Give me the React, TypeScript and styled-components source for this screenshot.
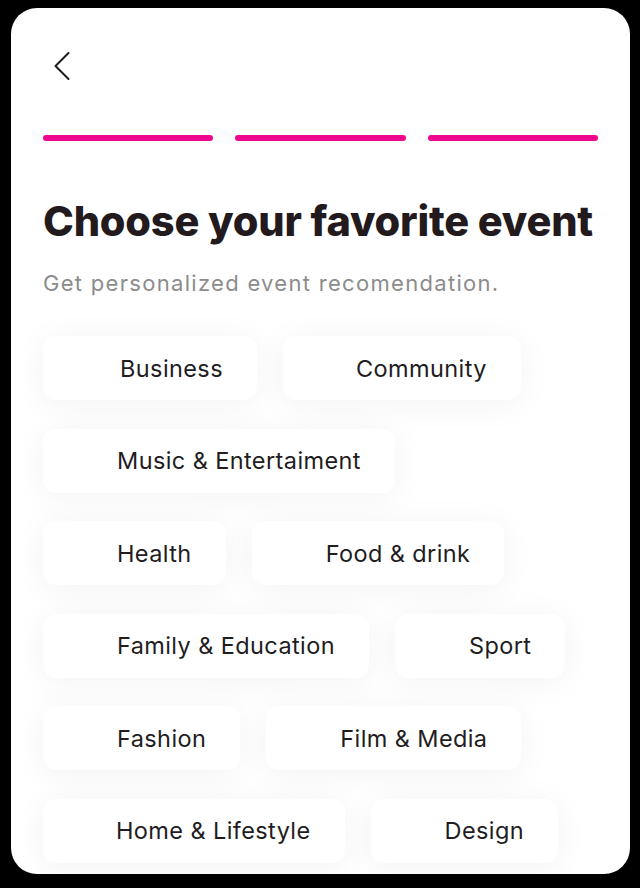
import React from "react";
import styled, { createGlobalStyle } from "styled-components";

const Global = createGlobalStyle`
  html, body {
    margin: 0;
    padding: 0;
    background: #000;
  }
  body {
    font-family: Inter, "Open Sans", sans-serif;
    -webkit-font-smoothing: antialiased;
  }
`;

const Screen = styled.div`
  width: 640px;
  height: 888px;
  background: #000;
  padding: 8px 10px 14px 11px;
  box-sizing: border-box;
`;

const Card = styled.div`
  width: 619px;
  height: 866px;
  background: #fff;
  border-radius: 26px;
  overflow: hidden;
  box-sizing: border-box;
  padding: 41px 32px 0 32px;
  display: flex;
  flex-direction: column;
`;

const BackButton = styled.button`
  width: 36px;
  height: 34px;
  margin-left: 11px;
  padding: 0;
  border: none;
  background: transparent;
  display: flex;
  align-items: center;
  justify-content: flex-start;
  cursor: pointer;
`;

const Progress = styled.div`
  display: grid;
  grid-template-columns: repeat(3, 1fr);
  gap: 22px;
  margin-top: 52px;
`;

const Step = styled.div<{ $done: boolean }>`
  height: 6px;
  border-radius: 3px;
  background: ${(p) => (p.$done ? "#f0068f" : "#ececec")};
`;

const Title = styled.h1`
  margin: 55px 0 0 0;
  font-family: Inter, sans-serif;
  font-weight: 800;
  font-size: 41.5px;
  line-height: 50px;
  letter-spacing: -0.2px;
  color: #231a1e;
`;

const Subtitle = styled.p`
  margin: 23px 0 0 0;
  font-family: Inter, sans-serif;
  font-weight: 400;
  font-size: 22px;
  line-height: 28px;
  letter-spacing: 1.3px;
  color: #8c8c8c;
`;

const Chips = styled.div`
  display: flex;
  flex-direction: column;
  gap: 28.6px;
  margin-top: 39px;
`;

const ChipRow = styled.div`
  display: flex;
  gap: 26px;
`;

const Chip = styled.button<{ $lead?: number }>`
  height: 64px;
  padding: 0 34px 0 ${(p) => p.$lead ?? 74}px;
  border: none;
  border-radius: 13px;
  background: #fff;
  box-shadow: 0 4px 34px rgba(0, 0, 0, 0.05);
  font-family: Inter, sans-serif;
  font-size: 23.5px;
  font-weight: 400;
  letter-spacing: 0.4px;
  color: #221c1f;
  white-space: nowrap;
  display: flex;
  align-items: center;
  cursor: pointer;
`;

const rows: { label: string; lead?: number }[][] = [
  [{ label: "Business", lead: 77 }, { label: "Community", lead: 73 }],
  [{ label: "Music & Entertaiment" }],
  [{ label: "Health" }, { label: "Food & drink" }],
  [{ label: "Family & Education" }, { label: "Sport" }],
  [{ label: "Fashion" }, { label: "Film & Media" }],
  [{ label: "Home & Lifestyle", lead: 73 }, { label: "Design" }],
];

export default function App() {
  return (
    <Screen>
      <Global />
      <Card>
        <BackButton aria-label="Back">
          <svg width="16" height="30" viewBox="0 0 16 30" fill="none">
            <path
              d="M14.5 2 L1.5 15 L14.5 28"
              stroke="#1e1b1c"
              strokeWidth="2"
              strokeLinecap="round"
              strokeLinejoin="round"
            />
          </svg>
        </BackButton>
        <Progress>
          <Step $done />
          <Step $done />
          <Step $done />
        </Progress>
        <Title>Choose your favorite event</Title>
        <Subtitle>Get personalized event recomendation.</Subtitle>
        <Chips>
          {rows.map((row, i) => (
            <ChipRow key={i}>
              {row.map((c) => (
                <Chip key={c.label} $lead={c.lead}>
                  {c.label}
                </Chip>
              ))}
            </ChipRow>
          ))}
        </Chips>
      </Card>
    </Screen>
  );
}
